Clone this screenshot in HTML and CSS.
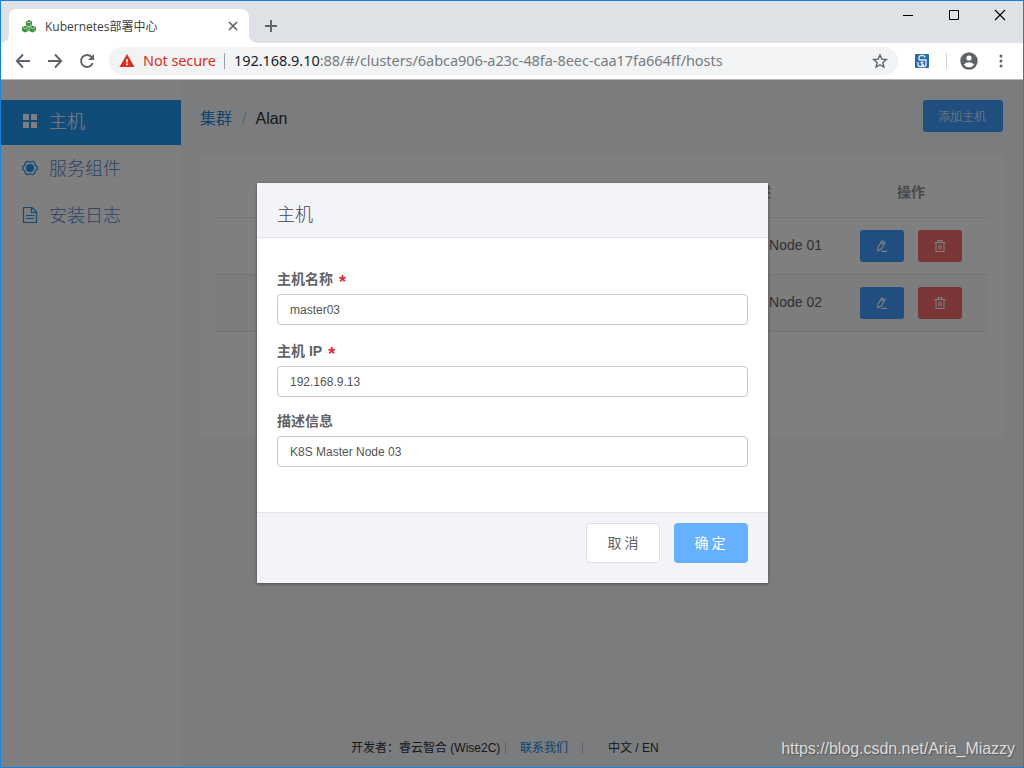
FILE: index.html
```html
<!DOCTYPE html>
<html lang="zh-CN">
<head>
<meta charset="utf-8">
<title>Kubernetes部署中心</title>
<link rel="stylesheet" href="styles.css">
</head>
<body>
<div class="window">
  <header class="tabstrip">
    <div class="tab">
      <svg class="favicon" width="14" height="13" viewBox="0 0 14 13"><g fill="#388e3c"><path d="M7 0l3 1.400v3.900L7 6.500 4 5.300V1.400z"/><path d="M3.400 5.700l3.300 1.400v4L3.400 12.600.1 11.100V7.100z"/><path d="M10.600 5.700l3.300 1.400v4l-3.300 1.500-3.300-1.500V7.100z"/></g><path d="M5 2L7 2.800 9 2M1.200 7.700l2.200.9 2.200-.9M8.400 7.700l2.200.9 2.200-.9M8 5l1.200-.6M4.400 11l1.400-.7M11.600 11l1.400-.7" fill="none" stroke="#e8f5e9" stroke-width=".8"/></svg>
      <span class="tab-title">Kubernetes部署中心</span>
      <svg class="tab-close" width="10" height="10" viewBox="0 0 10 10"><path d="M1 1l8 8M9 1L1 9" stroke="#5f6368" stroke-width="1.7"/></svg>
    </div>
    <svg class="new-tab" width="14" height="14" viewBox="0 0 14 14"><path d="M7 1v12M1 7h12" stroke="#5f6368" stroke-width="1.900"/></svg>
    <div class="controls">
      <svg width="12" height="12" viewBox="0 0 12 12"><path d="M1 6.500h10" stroke="#000"/></svg>
      <svg width="12" height="12" viewBox="0 0 12 12"><path d="M1.500 1.500h9v9h-9z" fill="none" stroke="#000"/></svg>
      <svg width="12" height="12" viewBox="0 0 12 12"><path d="M1 1l10 10M11 1L1 11" stroke="#000" stroke-width="1.100"/></svg>
    </div>
  </header>
  <div class="toolbar">
    <div class="nav">
      <svg width="16" height="16" viewBox="0 0 16 16"><path d="M15 8H2M8 1.500L1.800 8 8 14.500" fill="none" stroke="#5f6368" stroke-width="1.900"/></svg>
      <svg width="16" height="16" viewBox="0 0 16 16"><path d="M1 8h13M8 1.500L14.200 8 8 14.500" fill="none" stroke="#5f6368" stroke-width="1.900"/></svg>
      <svg width="16" height="16" viewBox="0 0 16 16"><path d="M13.700 10A6 6 0 1 1 12.500 3.900L14 5.500" fill="none" stroke="#5f6368" stroke-width="1.900"/><path d="M15 1v6H9z" fill="#5f6368"/></svg>
    </div>
    <div class="omnibox">
      <svg class="warn" width="16" height="14" viewBox="0 0 16 14"><path d="M8 0l7.500 13H.5z" fill="#d93025"/><path d="M8 5v3.500M8 9.500v1.800" stroke="#fff" stroke-width="1.600"/></svg>
      <span class="insecure">Not secure</span>
      <span class="sep"></span>
      <span class="url"><b>192.168.9.10</b>:88/#/clusters/6abca906-a23c-48fa-8eec-caa17fa664ff/hosts</span>
      <svg class="star" width="16" height="16" viewBox="0 0 16 16"><path d="M8 2l1.800 4.200 4.500.4-3.400 3 1 4.400L8 11.700 4.100 14l1-4.400-3.400-3 4.500-.4z" fill="none" stroke="#5f6368" stroke-width="1.400"/></svg>
    </div>
    <svg class="ext" width="14" height="14" viewBox="0 0 14 14"><rect width="14" height="14" rx="1" fill="#2869a8"/><path d="M4 6V3.500q0-2 3-2t3 2M4 6h7v4.500q0 2-2 2H5q-2 0-2-2V8M5.500 8.500h3M7 8.500v2.500h2" fill="none" stroke="#e5f0fb" stroke-width="1.300"/></svg>
    <span class="tool-sep"></span>
    <svg class="avatar" width="18" height="18" viewBox="0 0 18 18"><circle cx="9" cy="9" r="8.700" fill="#5f6368"/><circle cx="9" cy="6" r="2.600" fill="#fff"/><path d="M3.800 12.600Q9 8 14.200 12.600 12.500 15.300 9 15.300T3.800 12.600z" fill="#fff"/></svg>
    <svg class="dots" width="4" height="14" viewBox="0 0 4 14"><g fill="#5f6368"><circle cx="2" cy="2" r="1.500"/><circle cx="2" cy="7" r="1.500"/><circle cx="2" cy="12" r="1.500"/></g></svg>
  </div>
  <div class="page">
    <nav class="sidebar">
      <a class="item active"><svg width="16" height="16" viewBox="0 0 16 16"><path d="M1 1h6v6H1zM9 1h6v6H9zM1 9h6v6H1zM9 9h6v6H9z" fill="#fff"/></svg><span>主机</span></a>
      <a class="item"><svg width="16" height="16" viewBox="0 0 16 16"><circle cx="8" cy="8" r="4" fill="#2196f3"/><path d="M5.500 1.300Q8 3 10.500 1.300L12.800 2.700Q12.500 5.500 15.200 6.500v3Q12.500 10.500 12.800 13.300L10.500 14.700Q8 13 5.500 14.700L3.200 13.300Q3.500 10.500.8 9.500v-3Q3.500 5.500 3.200 2.700z" fill="none" stroke="#2196f3" stroke-width="1.200"/></svg><span>服务组件</span></a>
      <a class="item"><svg width="16" height="16" viewBox="0 0 16 16"><path d="M1.500.5h8.500l4.500 4.500v10.500h-13zM9.500.5v5h5M4 8.500h8M4 11.500h8" fill="none" stroke="#2196f3" stroke-width="1.200"/></svg><span>安装日志</span></a>
    </nav>
    <main class="main">
      <div class="topline">
        <div class="crumbs"><a>集群</a><i>/</i><span>Alan</span></div>
        <button class="add">添加主机</button>
      </div>
      <section class="card">
        <div class="row head"><span class="desc">描述</span><span class="ops">操作</span></div>
        <div class="row">
          <span class="desc">K8S Master Node 01</span>
          <span class="ops">
            <button class="edit"><svg width="12" height="12" viewBox="0 0 12 12"><path d="M2 7L6 .8l3 1.700L5.300 9 1.900 10.800zM5 2.500L8 4.200M5.500 11.300H11" fill="none" stroke="#fff" stroke-width="1.200"/></svg></button>
            <button class="del"><svg width="12" height="12" viewBox="0 0 12 12"><path d="M.5 2.500h11M4 2.500V.5h4v2M2 2.500v9h8v-9M5 4.500v5M7 4.500v5" fill="none" stroke="#fff" stroke-width="1.100"/></svg></button>
          </span>
        </div>
        <div class="row striped">
          <span class="desc">K8S Master Node 02</span>
          <span class="ops">
            <button class="edit"><svg width="12" height="12" viewBox="0 0 12 12"><path d="M2 7L6 .8l3 1.700L5.300 9 1.900 10.800zM5 2.500L8 4.200M5.500 11.300H11" fill="none" stroke="#fff" stroke-width="1.200"/></svg></button>
            <button class="del"><svg width="12" height="12" viewBox="0 0 12 12"><path d="M.5 2.500h11M4 2.500V.5h4v2M2 2.500v9h8v-9M5 4.500v5M7 4.500v5" fill="none" stroke="#fff" stroke-width="1.100"/></svg></button>
          </span>
        </div>
      </section>
    </main>
    <footer class="footer"><span class="dev">开发者：睿云智合 (Wise2C)</span><i></i><a>联系我们</a><i></i><span class="lang">中文 / EN</span></footer>
    <div class="overlay">
      <div class="dialog">
        <h2 class="dialog-head">主机</h2>
        <form class="dialog-body">
          <label>主机名称<em>*</em></label>
          <input class="first" type="text" value="master03">
          <label>主机 IP<em>*</em></label>
          <input class="second" type="text" value="192.168.9.13">
          <label>描述信息</label>
          <input type="text" value="K8S Master Node 03">
        </form>
        <div class="dialog-foot"><button class="cancel">取消</button><button class="ok">确定</button></div>
      </div>
    </div>
    <div class="watermark">https://blog.csdn.net/Aria_Miazzy</div>
  </div>
</div>
</body>
</html>
```
FILE: styles.css
```css
* { box-sizing: border-box; }
body { margin: 0; font-family: "Liberation Sans", "Noto Sans CJK SC", sans-serif; }
svg { display: block; flex: none; }
button { font-family: inherit; border: 0; padding: 0; }
i, em { font-style: normal; }

.window { width: 1024px; height: 768px; border: 1px solid #1a82d6; display: flex; flex-direction: column; overflow: hidden; }

.tabstrip { height: 42px; flex: none; background: #dee1e6; display: flex; align-items: flex-end; padding-left: 8px; }
.tabstrip::before { content: ""; width: 8px; height: 8px; margin-left: -8px; background: radial-gradient(circle at 0 0, #dee1e6 7.5px, #fff 8px); }
.tab { width: 240px; height: 34px; background: #fff; border-radius: 8px 8px 0 0; display: flex; align-items: center; padding: 0 11px 0 13px; }
.tab::after { content: ""; align-self: flex-end; flex: none; width: 8px; height: 8px; margin-left: 11px; margin-right: -19px; background: radial-gradient(circle at 100% 0, #dee1e6 7.5px, #fff 8px); }
.new-tab { margin: 0 0 10px 15px; }
.tab-title { flex: 1; margin-left: 9px; padding-top: 1px; font: 12px/18px "Open Sans", "Noto Sans CJK SC", sans-serif; color: #3c4043; white-space: nowrap; }
.controls { margin-left: auto; display: flex; gap: 34px; padding-right: 17px; align-self: flex-start; margin-top: 8px; }

.toolbar { height: 37px; flex: none; background: #fff; border-bottom: 1px solid #b6b4b6; display: flex; align-items: center; padding: 0 20px 0 14px; }
.nav { display: flex; gap: 16px; }
.omnibox { width: 789px; height: 28px; margin-left: 14px; background: #f1f3f4; border-radius: 14px; display: flex; align-items: center; padding: 0 10px; font: 14.500px/20px "Noto Sans", sans-serif; color: #777c81; white-space: nowrap; }
.insecure { color: #d93025; margin-left: 8px; width: 73px; padding-bottom: 2px; letter-spacing: -.1px; }
.sep { width: 1px; height: 16px; background: #9aa0a6; margin: 0 9px 0 8px; }
.url { padding-bottom: 2px; letter-spacing: -.055px; }
.url b { font-weight: 400; color: #202124; }
.star { margin-left: auto; }
.ext { margin-left: 17px; }
.tool-sep { width: 1px; height: 16px; background: #d0d3d6; margin: 0 13px 0 17px; }
.dots { margin-left: auto; }

.page { position: relative; flex: 1; display: grid; grid-template-columns: 180px 1fr; grid-template-rows: 1fr 38px; background: #f5f8fd; min-height: 0; }
.sidebar { grid-column: 1; grid-row: 1 / 3; background: #fff; padding-top: 20px; display: flex; flex-direction: column; gap: 2px; }
.item { height: 45px; display: flex; align-items: center; gap: 11px; padding-left: 21px; padding-bottom: 3px; font-size: 18px; font-weight: 300; color: #5d86d0; }
.item span { padding-bottom: 2px; }
.item.active { background: #2398f2; color: #fff; }
.main { grid-column: 2; grid-row: 1; padding: 20px 20px 0; }
.topline { display: flex; justify-content: space-between; height: 55px; }
.crumbs { display: flex; height: 36px; align-items: center; font-size: 16px; color: #303133; white-space: nowrap; }
.crumbs a { color: #2085d8; padding-bottom: 2px; margin-left: -1px; }
.crumbs i { color: #c0c4cc; margin: 0 9px 0 10px; }
.crumbs i, .crumbs span { padding-top: 1px; }
.add { width: 80px; height: 32px; border-radius: 3px; background: #409eff; color: #fff; font-size: 12px; font-weight: 300; padding: 0 2px 2px 0; }
.card { height: 282px; background: #fff; padding: 15px; }
.row { height: 57px; display: grid; grid-template-columns: 464px 154px 154px; align-items: center; text-align: center; font-size: 14px; color: #606266; border-bottom: 1px solid #e6e9ee; }
.row .desc { grid-column: 2; white-space: nowrap; padding-bottom: 2px; }
.row.head { height: 48px; color: #909399; font-weight: 700; padding-bottom: 3px; }
.row.head .ops { padding-bottom: 2px; }
.row.striped { background: #fafafa; }
.ops { display: flex; justify-content: center; gap: 14px; }
.edit, .del { width: 44px; height: 32px; border-radius: 3px; display: flex; align-items: center; justify-content: center; }
.edit { background: #409eff; }
.del { background: #f56c6c; }
.footer { grid-column: 1 / 3; grid-row: 2; display: flex; align-items: center; padding-left: 350px; font-size: 12px; line-height: 18px; color: #303133; white-space: nowrap; }
.footer a { color: #2085d8; margin-left: 14px; margin-right: 14px; }
.footer i { width: 1px; height: 12px; background: #c5c8ce; }
.dev { width: 154px; }
.lang { margin-left: 25px; }

.overlay { position: absolute; inset: 0; background: rgba(0, 0, 0, .5); padding: 103px 0 0 256px; }
.dialog { width: 511px; height: 400px; background: #fff; box-shadow: 0 1px 3px rgba(0, 0, 0, .4); display: flex; flex-direction: column; }
.dialog-head { margin: 0; height: 55px; background: #f3f4f9; border-bottom: 1px solid #e3e5e8; padding: 19px 20px 0; font-size: 18px; line-height: 26px; font-weight: 300; color: #444; }
.dialog-body { flex: 1; padding: 31px 20px 0; display: flex; flex-direction: column; }
.dialog-body label { display: flex; font-size: 14px; line-height: 20px; height: 20px; margin-bottom: 5px; font-weight: 700; color: #606266; white-space: pre; }
.dialog-body em { color: #e02d3c; margin-left: 6px; padding-top: 3px; font-size: 18px; }
.dialog-body input { width: 471px; height: 31px; border: 1px solid #c8c8c8; border-radius: 4px; padding: 0 12px; font: 12px "Liberation Sans", sans-serif; color: #555; background: #fff; }
.dialog-body .first { margin-bottom: 16px; }
.dialog-body .second { margin-bottom: 14px; }
.dialog-foot { height: 71px; background: #f3f4f9; border-top: 1px solid #e3e5e8; display: flex; justify-content: flex-end; gap: 14px; padding: 10px 20px; }
.dialog-foot button { width: 74px; height: 40px; border-radius: 4px; font-size: 14px; letter-spacing: 3px; text-indent: 3px; font-weight: 400; padding-bottom: 2px; }
.dialog-foot .cancel { background: #fff; border: 1px solid #dcdfe6; color: #606266; }
.dialog-foot .ok { background: #66b1ff; color: #fff; text-indent: 1px; }
.watermark { position: absolute; right: 8px; bottom: 8px; font-size: 16px; line-height: 20px; letter-spacing: -.03px; color: #dcdcdc; text-shadow: 1px 1px 1px rgba(60, 60, 60, .6); }
```
